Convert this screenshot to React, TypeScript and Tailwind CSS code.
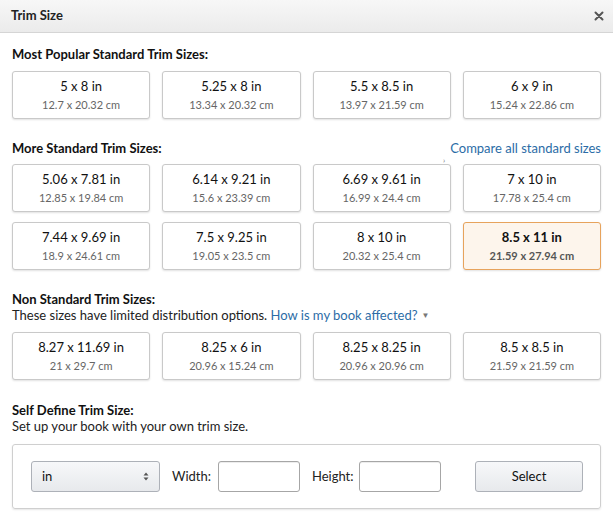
const popular = [
  ["5 x 8 in", "12.7 x 20.32 cm"],
  ["5.25 x 8 in", "13.34 x 20.32 cm"],
  ["5.5 x 8.5 in", "13.97 x 21.59 cm"],
  ["6 x 9 in", "15.24 x 22.86 cm"],
];

const more = [
  ["5.06 x 7.81 in", "12.85 x 19.84 cm"],
  ["6.14 x 9.21 in", "15.6 x 23.39 cm"],
  ["6.69 x 9.61 in", "16.99 x 24.4 cm"],
  ["7 x 10 in", "17.78 x 25.4 cm"],
  ["7.44 x 9.69 in", "18.9 x 24.61 cm"],
  ["7.5 x 9.25 in", "19.05 x 23.5 cm"],
  ["8 x 10 in", "20.32 x 25.4 cm"],
  ["8.5 x 11 in", "21.59 x 27.94 cm"],
];

const nonStandard = [
  ["8.27 x 11.69 in", "21 x 29.7 cm"],
  ["8.25 x 6 in", "20.96 x 15.24 cm"],
  ["8.25 x 8.25 in", "20.96 x 20.96 cm"],
  ["8.5 x 8.5 in", "21.59 x 21.59 cm"],
];

function SizeCard({ inch, cm, selected }: { inch: string; cm: string; selected?: boolean }) {
  return (
    <button
      className={`h-[48px] rounded-[3px] border flex flex-col items-center justify-center shadow-[0_1px_2px_rgba(0,0,0,0.12)] ${
        selected ? "bg-[#fdf5ec] border-[#e7a35c]" : "bg-white border-[#c9c9c9]"
      }`}
    >
      <span className={`text-[13px] leading-[17px] text-[#111] ${selected ? "font-bold" : ""}`}>{inch}</span>
      <span className={`text-[11px] leading-[16px] mt-[2px] ${selected ? "font-bold text-[#555]" : "text-[#666]"}`}>
        {cm}
      </span>
    </button>
  );
}

function Grid({ items, selectedIdx }: { items: string[][]; selectedIdx?: number }) {
  return (
    <div className="grid grid-cols-4 gap-x-[12px] gap-y-[10px]">
      {items.map(([a, b], i) => (
        <SizeCard key={a} inch={a} cm={b} selected={i === selectedIdx} />
      ))}
    </div>
  );
}

export default function App() {
  return (
    <div className="w-[613px] h-[520px] bg-white text-[#111] font-['Lato','Open_Sans',sans-serif] overflow-hidden">
      <div className="h-[33px] flex items-center justify-between pl-[11px] pr-[9px] bg-gradient-to-b from-[#f7f7f7] to-[#ebebeb] border-b border-[#d5d5d5]">
        <span className="text-[13px] font-bold text-[#222]">Trim Size</span>
        <svg width="10" height="10" viewBox="0 0 10 10" className="text-[#555]">
          <path d="M1.5 1.5 L8.5 8.5 M8.5 1.5 L1.5 8.5" stroke="currentColor" strokeWidth="2" strokeLinecap="round" />
        </svg>
      </div>

      <div className="px-[12px] pt-[12px]">
        <h3 className="text-[13px] font-bold leading-[18px]">Most Popular Standard Trim Sizes:</h3>
        <div className="mt-[8px]">
          <Grid items={popular} />
        </div>

        <div className="mt-[20px] flex items-end justify-between">
          <h3 className="text-[13px] font-bold leading-[18px]">More Standard Trim Sizes:</h3>
          <a className="text-[13px] text-[#2b6ca6] leading-[18px]">Compare all standard sizes</a>
        </div>
        <div className="relative mt-[7px]">
          <span className="absolute left-[431px] top-[-10px] text-[8px] text-[#777]">›</span>
          <Grid items={more} selectedIdx={7} />
        </div>

        <h3 className="mt-[21px] text-[13px] font-bold leading-[16px]">Non Standard Trim Sizes:</h3>
        <p className="text-[13px] leading-[17px] text-[#222]">
          These sizes have limited distribution options.{" "}
          <a className="text-[#2b6ca6]">How is my book affected?</a>
          <span className="text-[#777] text-[8px] ml-[4px] align-[2px]">▼</span>
        </p>
        <div className="mt-[8px]">
          <Grid items={nonStandard} />
        </div>

        <h3 className="mt-[22px] text-[13px] font-bold leading-[16px]">Self Define Trim Size:</h3>
        <p className="text-[13px] leading-[17px] text-[#222]">Set up your book with your own trim size.</p>

        <div className="mt-[9px] h-[65px] border border-[#cfcfcf] rounded-[3px] shadow-[0_1px_2px_rgba(0,0,0,0.1)] flex items-center pl-[18px] pr-[17px]">
          <div className="w-[129px] h-[31px] rounded-[3px] border border-[#adb1b8] bg-gradient-to-b from-[#f7f8fa] to-[#e7e9ec] flex items-center justify-between px-[10px]">
            <span className="text-[13px]">in</span>
            <svg width="6" height="9" viewBox="0 0 6 9" className="text-[#555]">
              <path d="M0.5 3.5 L3 0.5 L5.5 3.5 Z M0.5 5.5 L3 8.5 L5.5 5.5 Z" fill="currentColor" />
            </svg>
          </div>
          <span className="ml-[12px] text-[13px] text-[#222]">Width:</span>
          <div className="ml-[7px] w-[82px] h-[31px] border border-[#a6a6a6] rounded-[3px] bg-white shadow-[0_1px_0_rgba(0,0,0,0.07)_inset]" />
          <span className="ml-[12px] text-[13px] text-[#222]">Height:</span>
          <div className="ml-[5px] w-[82px] h-[31px] border border-[#a6a6a6] rounded-[3px] bg-white shadow-[0_1px_0_rgba(0,0,0,0.07)_inset]" />
          <button className="ml-auto w-[108px] h-[31px] rounded-[3px] border border-[#adb1b8] bg-gradient-to-b from-[#f7f8fa] to-[#e7e9ec] text-[13px] text-[#111]">
            Select
          </button>
        </div>
      </div>
    </div>
  );
}
